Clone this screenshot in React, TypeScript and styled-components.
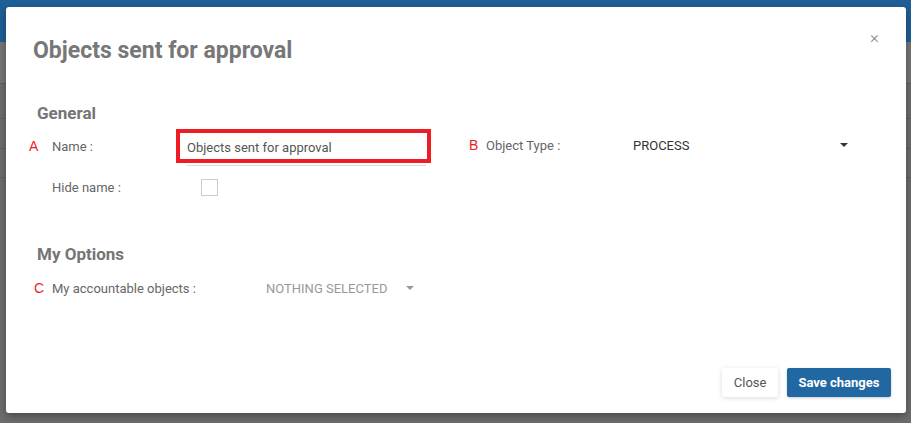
import React from "react";
import styled, { createGlobalStyle } from "styled-components";

const Global = createGlobalStyle`
  html, body { margin: 0; padding: 0; }
  body { font-family: Roboto, "Liberation Sans", Arial, sans-serif; overflow: hidden; }
`;

const Page = styled.div`
  position: relative;
  width: 911px;
  height: 423px;
  background: #6d6d6d;
  overflow: hidden;
`;

const TopBar = styled.div`
  height: 42px;
  background: #1f5f97;
`;

const Toolbar = styled.div`
  height: 41px;
  background: #767676;
  border-bottom: 1px solid #5d5d5d;
`;

const BgRow = styled.div<{ $h: number }>`
  height: ${(p) => p.$h}px;
  border-bottom: 1px solid #626262;
`;

const Modal = styled.div`
  position: absolute;
  top: 7px;
  left: 6px;
  width: 900px;
  height: 406px;
  background: #fff;
  border-radius: 3px;
  box-shadow: 0 3px 9px rgba(0, 0, 0, 0.35);
  display: flex;
  flex-direction: column;
  box-sizing: border-box;
`;

const Header = styled.div`
  display: flex;
  justify-content: space-between;
  align-items: flex-start;
  padding: 31px 26px 0 27px;
`;

const Title = styled.h4`
  margin: 0;
  font-size: 23px;
  line-height: 26px;
  font-weight: 700;
  color: #777;
`;

const CloseX = styled.span`
  font-size: 17px;
  line-height: 17px;
  color: #8a8a8a;
  margin-top: -9px;
  margin-right: 1px;
  font-weight: 300;
`;

const Body = styled.div`
  display: flex;
  flex-direction: column;
  padding: 0 0 0 23px;
`;

const Section = styled.h5<{ $mt: number }>`
  margin: ${(p) => p.$mt}px 0 0 8px;
  font-size: 17px;
  line-height: 20px;
  font-weight: 700;
  color: #757575;
`;

const Row = styled.div<{ $mt: number; $h: number }>`
  display: flex;
  align-items: flex-start;
  margin-top: ${(p) => p.$mt}px;
  min-height: ${(p) => p.$h}px;
`;

const Cell = styled.div<{ $w?: number; $h: number }>`
  display: flex;
  align-items: center;
  height: ${(p) => p.$h}px;
  ${(p) => (p.$w ? `width: ${p.$w}px; flex: none;` : "")}
`;

const Marker = styled.span<{ $w: number; $pl?: number }>`
  width: ${(p) => p.$w}px;
  padding-left: ${(p) => p.$pl ?? 0}px;
  box-sizing: border-box;
  flex: none;
  color: #ee1c25;
  font-size: 14px;
  font-family: "Liberation Sans", Arial, sans-serif;
`;

const Label = styled.span<{ $w: number }>`
  width: ${(p) => p.$w}px;
  flex: none;
  font-size: 13px;
  color: #666;
`;

const NameField = styled.div`
  display: flex;
  flex-direction: column;
`;

const RedBox = styled.div`
  width: 255px;
  height: 34px;
  box-sizing: border-box;
  border: 4px solid #ee1c25;
  padding: 2px 0 0 7px;
  display: flex;
  align-items: center;
  font-size: 13px;
  color: #555;
`;

const Underline = styled.div`
  margin: 2px 0 0 11px;
  width: 239px;
  height: 1px;
  background: #dcdcdc;
`;

const SelectValue = styled.div<{ $w: number; $muted?: boolean }>`
  width: ${(p) => p.$w}px;
  display: flex;
  align-items: center;
  justify-content: space-between;
  font-size: 13px;
  color: ${(p) => (p.$muted ? "#999" : "#333")};
  text-transform: uppercase;
`;

const Caret = styled.span<{ $muted?: boolean }>`
  width: 0;
  height: 0;
  border-left: 4px solid transparent;
  border-right: 4px solid transparent;
  border-top: 4px solid ${(p) => (p.$muted ? "#999" : "#333")};
`;

const Checkbox = styled.span`
  width: 17px;
  height: 17px;
  box-sizing: border-box;
  border: 1px solid #ccc;
  margin-left: 25px;
  margin-top: 1px;
`;

const Footer = styled.div`
  margin-top: auto;
  display: flex;
  justify-content: flex-end;
  gap: 9px;
  padding: 0 15px 16px 0;
`;

const Button = styled.button<{ $primary?: boolean }>`
  height: 29px;
  border: none;
  border-radius: 2px;
  padding: 0 ${(p) => (p.$primary ? "11.5px" : "11.5px")};
  font-family: Roboto, "Liberation Sans", Arial, sans-serif;
  font-size: 13px;
  font-weight: ${(p) => (p.$primary ? 700 : 400)};
  color: ${(p) => (p.$primary ? "#fff" : "#555")};
  background: ${(p) => (p.$primary ? "#2167a2" : "#fff")};
  box-shadow: ${(p) =>
    p.$primary ? "0 1px 3px rgba(0, 0, 0, 0.2)" : "0 1px 5px rgba(0, 0, 0, 0.15)"};
`;

export default function App() {
  return (
    <>
      <Global />
      <Page>
        <TopBar />
        <Toolbar />
        <BgRow $h={34} />
        <BgRow $h={29} />
        <BgRow $h={28} />
        <Modal>
          <Header>
            <Title>Objects sent for approval</Title>
            <CloseX>×</CloseX>
          </Header>
          <Body>
            <Section $mt={39}>General</Section>
            <Row $mt={6} $h={36}>
              <Cell $h={34}>
                <Marker $w={23}>A</Marker>
                <Label $w={124}>Name :</Label>
              </Cell>
              <NameField>
                <RedBox>Objects sent for approval</RedBox>
                <Underline />
              </NameField>
              <Cell $h={32}>
                <Marker $w={55} $pl={38}>B</Marker>
                <Label $w={147}>Object Type :</Label>
                <SelectValue $w={215}>
                  PROCESS
                  <Caret />
                </SelectValue>
              </Cell>
            </Row>
            <Row $mt={11} $h={20}>
              <Cell $h={20}>
                <Marker $w={23} />
                <Label $w={124}>Hide name :</Label>
                <Checkbox />
              </Cell>
            </Row>
            <Section $mt={47}>My Options</Section>
            <Row $mt={14} $h={20}>
              <Cell $h={20}>
                <Marker $w={23} $pl={5}>C</Marker>
                <Label $w={214}>My accountable objects :</Label>
                <SelectValue $w={148} $muted>
                  Nothing selected
                  <Caret $muted />
                </SelectValue>
              </Cell>
            </Row>
          </Body>
          <Footer>
            <Button>Close</Button>
            <Button $primary>Save changes</Button>
          </Footer>
        </Modal>
      </Page>
    </>
  );
}
